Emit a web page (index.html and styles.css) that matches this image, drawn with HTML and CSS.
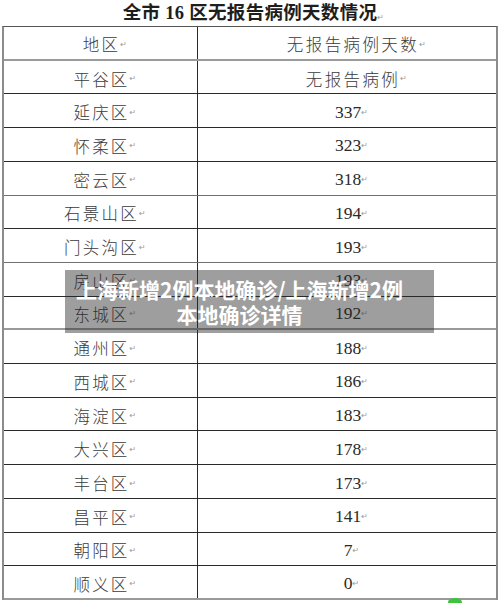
FILE: index.html
```html
<!DOCTYPE html>
<html lang="zh-CN">
<head>
<meta charset="utf-8">
<title>全市16区无报告病例天数情况</title>
<link rel="stylesheet" href="styles.css">
</head>
<body>
<div class="page">
  <h1 class="title">全市 16 区无报告病例天数情况<span class="mark">↵</span></h1>
  <div class="table">
    <div class="row light"><div class="cell name">地区<span class="mark">↵</span></div><div class="cell val cjk">无报告病例天数<span class="mark">↵</span></div></div>
    <div class="row"><div class="cell name">平谷区<span class="mark">↵</span></div><div class="cell val cjk">无报告病例<span class="mark">↵</span></div></div>
    <div class="row"><div class="cell name">延庆区<span class="mark">↵</span></div><div class="cell val">337<span class="mark">↵</span></div></div>
    <div class="row"><div class="cell name">怀柔区<span class="mark">↵</span></div><div class="cell val">323<span class="mark">↵</span></div></div>
    <div class="row mid"><div class="cell name">密云区<span class="mark">↵</span></div><div class="cell val">318<span class="mark">↵</span></div></div>
    <div class="row"><div class="cell name">石景山区<span class="mark">↵</span></div><div class="cell val">194<span class="mark">↵</span></div></div>
    <div class="row mid"><div class="cell name">门头沟区<span class="mark">↵</span></div><div class="cell val">193<span class="mark">↵</span></div></div>
    <div class="row"><div class="cell name">房山区<span class="mark">↵</span></div><div class="cell val">193<span class="mark">↵</span></div></div>
    <div class="row light"><div class="cell name">东城区<span class="mark">↵</span></div><div class="cell val">192<span class="mark">↵</span></div></div>
    <div class="row"><div class="cell name">通州区<span class="mark">↵</span></div><div class="cell val">188<span class="mark">↵</span></div></div>
    <div class="row"><div class="cell name">西城区<span class="mark">↵</span></div><div class="cell val">186<span class="mark">↵</span></div></div>
    <div class="row"><div class="cell name">海淀区<span class="mark">↵</span></div><div class="cell val">183<span class="mark">↵</span></div></div>
    <div class="row"><div class="cell name">大兴区<span class="mark">↵</span></div><div class="cell val">178<span class="mark">↵</span></div></div>
    <div class="row"><div class="cell name">丰台区<span class="mark">↵</span></div><div class="cell val">173<span class="mark">↵</span></div></div>
    <div class="row"><div class="cell name">昌平区<span class="mark">↵</span></div><div class="cell val">141<span class="mark">↵</span></div></div>
    <div class="row"><div class="cell name">朝阳区<span class="mark">↵</span></div><div class="cell val">7<span class="mark">↵</span></div></div>
    <div class="row last"><div class="cell name">顺义区<span class="mark">↵</span></div><div class="cell val">0<span class="mark">↵</span></div></div>
  </div>
  <div class="caption">
    <p class="caption-text">上海新增2例本地确诊/上海新增2例<br>本地确诊详情</p>
  </div>
  <div class="blob"></div>
</div>
</body>
</html>
```

FILE: styles.css
```css
html, body {
  margin: 0;
  padding: 0;
  background: #ffffff;
}

.page {
  position: relative;
  width: 500px;
  height: 603px;
  overflow: hidden;
  font-family: "Liberation Serif", "Noto Sans CJK SC", serif;
  color: #333333;
}

.title {
  margin: 0;
  height: 26px;
  box-sizing: border-box;
  padding-top: 1px;
  text-align: center;
  font-size: 18.5px;
  line-height: 24px;
  font-weight: 700;
  color: #1e1e1e;
  letter-spacing: 0.3px;
}

.mark {
  display: inline-block;
  width: 0;
  font-family: "DejaVu Sans", sans-serif;
  font-size: 8px;
  font-weight: 400;
  color: #9a9a9a;
  letter-spacing: 0;
  vertical-align: -1px;
  overflow: visible;
  white-space: nowrap;
}

.table {
  margin-left: 2px;
  width: 496px;
  height: 574px;
  box-sizing: border-box;
  border-top: 1px solid #555555;
  border-left: 2px solid #8c8c8c;
  border-right: 2px solid #8c8c8c;
  display: grid;
  grid-template-rows: repeat(17, 1fr);
}

.row {
  display: grid;
  grid-template-columns: 194px 1fr;
  border-bottom: 1px solid #2a2a2a;
}

.row.light {
  border-bottom: 2px solid #9a9a9a;
}

.row.mid {
  border-bottom-color: #707070;
}

.row.last {
  border-bottom: 2px solid #9a9a9a;
}

.cell {
  display: flex;
  align-items: center;
  justify-content: center;
  white-space: nowrap;
  padding-top: 3px;
}

.name {
  border-right: 1px solid #2a2a2a;
  font-size: 16.5px;
  letter-spacing: 2.2px;
  padding-left: 2px;
  font-weight: 300;
  color: #3a3a3a;
}

.val {
  font-size: 17.5px;
  color: #2a2a2a;
  padding-left: 2px;
}

.val.cjk {
  font-size: 16.5px;
  letter-spacing: 2.4px;
  font-weight: 300;
  color: #3a3a3a;
  padding-left: 12px;
}

.caption {
  position: absolute;
  left: 65px;
  top: 270px;
  width: 369px;
  height: 63px;
  background: rgba(40, 40, 40, 0.45);
  display: flex;
  align-items: center;
  justify-content: center;
}

.caption-text {
  margin: 0;
  padding-right: 20px;
  text-align: center;
  font-family: "Noto Sans CJK SC", sans-serif;
  font-weight: 700;
  font-size: 21px;
  line-height: 25px;
  color: #ffffff;
}

.blob {
  position: absolute;
  left: 448px;
  top: 598px;
  width: 14px;
  height: 8px;
  border-radius: 50%;
  background: #3cc43c;
}
```
